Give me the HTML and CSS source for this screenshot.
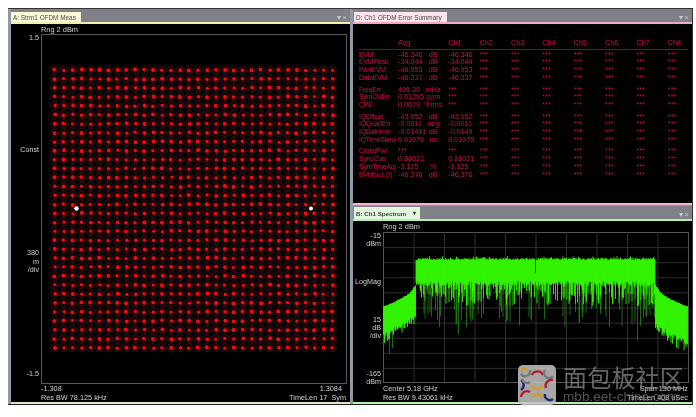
FILE: index.html
```html
<!DOCTYPE html>
<html lang="en">
<head>
<meta charset="utf-8">
<title>OFDM Measurement</title>
<link rel="stylesheet" href="styles.css">
</head>
<body>
<main class="screen">
  <section class="win win-a">
    <header class="bar bar-a">
      <span class="tab tab-a">A: Strm1 OFDM Meas</span>
      <span class="ctl">▾ ×</span>
    </header>
    <div class="body body-a">
      <div class="chart-grid chart-a">
        <div class="rng">Rng 2 dBm</div>
        <div class="ylabels ya">
          <span class="ya1">1.5</span>
          <span class="ya2">Const</span>
          <span class="ya3">380<br>m<br>/div</span>
          <span class="ya4">-1.5</span>
        </div>
        <svg id="constellation" class="plot plot-a" width="306" height="350" viewBox="0 0 306 350"></svg>
        <div class="foot">
          <div class="foot-row"><span>-1.308</span><span class="end-a1">1.3084</span></div>
          <div class="foot-row"><span>Res BW 78.125 kHz</span><span>TimeLen 17&nbsp; Sym</span></div>
        </div>
      </div>
    </div>
  </section>
  <div class="right">
    <section class="win win-d">
      <header class="bar bar-d">
        <span class="tab tab-d">D: Ch1 OFDM Error Summary</span>
        <span class="ctl">▾ ×</span>
      </header>
      <div class="body body-d">
        <table class="summary">
          <thead>
            <tr><th></th><th>Avg</th><th></th><th>Ch1</th><th>Ch2</th><th>Ch3</th><th>Ch4</th><th>Ch5</th><th>Ch6</th><th>Ch7</th><th>Ch8</th></tr>
          </thead>
          <tbody id="rows"></tbody>
        </table>
      </div>
    </section>
    <section class="win win-b">
      <header class="bar bar-b">
        <span class="tab tab-b"><span>B: Ch1 Spectrum</span><span class="tab-arrow">▾</span></span>
        <span class="ctl">▾ ×</span>
      </header>
      <div class="body body-b">
        <div class="chart-grid chart-b">
          <div class="rng">Rng 2 dBm</div>
          <div class="ylabels yb">
            <span class="yb1">-15<br>dBm</span>
            <span class="yb2">LogMag</span>
            <span class="yb3">15<br>dB<br>/div</span>
            <span class="yb4">-165<br>dBm</span>
          </div>
          <svg id="spectrum" class="plot plot-b" width="306" height="151" viewBox="0 0 306 151"></svg>
          <div class="foot foot-b">
            <div class="foot-row"><span>Center 5.18 GHz</span><span>Span 130 MHz</span></div>
            <div class="foot-row"><span>Res BW 9.43061 kHz</span><span>TimeLen 408 uSec</span></div>
          </div>
        </div>
      </div>
    </section>
  </div>
  <aside class="mark">
    <svg class="mark-logo" width="40" height="40" viewBox="0 0 40 40">
      <rect width="38" height="40" rx="5" fill="#c4c4c4" fill-opacity=".85"/>
      <g fill="none" stroke-width="2.4">
        <path d="M3 9a5 5 0 0 0 9 -4" stroke="#77787c"/>
        <path d="M14 10a6 6 0 0 1 11 0" stroke="#b0202c"/>
        <path d="M27 5a5 5 0 0 0 8 6" stroke="#77787c"/>
        <path d="M3 15a6 6 0 0 1 0 10" stroke="#1c2a70"/>
        <path d="M13 20a6 6 0 0 0 11 0" stroke="#d89a20"/>
        <path d="M35 15a6 6 0 0 0 -7 8" stroke="#b0202c"/>
        <path d="M3 32a6 6 0 0 1 9 -5" stroke="#b0202c"/>
        <path d="M14 33a6 6 0 0 1 11 0" stroke="#d89a20"/>
        <path d="M27 29a5 5 0 0 0 8 5" stroke="#1c2a70"/>
      </g>
      <g fill="none" stroke-width="2.4">
        <path d="M3 6a5 5 0 0 1 6 -2" stroke="#d89a20"/>
        <path d="M4 14a5 5 0 0 0 8 3" stroke="#77787c"/>
      </g>
    </svg>
    <div class="mark-text">
      <div class="mark-cn">面包板社区</div>
      <div class="mark-en">mbb.eet-china.com</div>
    </div>
  </aside>
</main>
<script src="chart.js"></script>
</body>
</html>
```

FILE: styles.css
```css
* { box-sizing: border-box; }
html, body { margin: 0; padding: 0; background: #fff; }
body { width: 696px; height: 417px; overflow: hidden; font-family: "Liberation Sans", Arial, sans-serif; }

.screen {
  position: relative;
  display: flex;
  width: 685px;
  height: 397px;
  margin: 8px 0 0 8px;
  background: #8f9aa4;
  border-top: 1px solid #333;
  border-bottom: 1px solid #222;
  border-right: 1px solid #333;
  filter: blur(.45px);
}
.right { display: flex; flex-direction: column; flex: 1; min-width: 0; }
.win { display: flex; flex-direction: column; min-height: 0; }
.win-a { width: 345px; padding: 0 3px; background: #8f9aa4; }
.win-d { height: 196px; border-bottom: 2px solid #f4b0cc; }
.win-b { flex: 1; padding-top: 1px; }

.bar {
  display: flex;
  justify-content: space-between;
  align-items: flex-end;
  height: 15px;
  flex: none;
  background: #7f8088;
  border-bottom: 2px solid;
  padding-top: 3px;
}
.bar-a { border-color: #f0eeb0; }
.bar-d { border-color: #f0a8c4; }
.bar-b { border-color: #b8eeb0; padding-top: 1px; }

.tab {
  display: block;
  height: 100%;
  font-size: 6.4px;
  line-height: 11px;
  padding: 0 2px;
  color: #4a4a4a;
  white-space: nowrap;
  opacity: .99;
}
.tab-a { width: 70px; background: #fdfcd8; }
.tab-d { width: 93px; background: #fde8f0; margin-left: 1px; }
.tab-b { display: flex; gap: 7px; width: 66px; background: #e4f8e0; margin-left: 1px; font-size: 6.2px; font-weight: bold; color: #3c3c3c; line-height: 13px; }
.tab-arrow { font-size: 6px; }
.ctl { font-size: 7.5px; line-height: 9px; color: #c8c8cc; padding-right: 3px; }

.body { flex: 1; background: #000; min-height: 0; color: #d4d4d4; font-size: 7.2px; line-height: 8.5px; }
.body-a { border-bottom: 2px solid #d8e8c0; }
.body-d { padding-top: 15px; }
.body-b { border-bottom: 2px solid #b8eeb0; }

.chart-grid { display: grid; grid-template-rows: auto auto auto; }
.chart-a { grid-template-columns: 30px 306px; padding-top: 2px; }
.chart-b { grid-template-columns: 30px 306px; }
.rng { grid-column: 2; height: 8px; line-height: 8px; font-size: 7.4px; opacity: .99; }
.chart-b .rng { height: 11px; padding-top: 2px; }
.ylabels { grid-column: 1; display: flex; flex-direction: column; text-align: right; padding-right: 2px; opacity: .99; }
.ya { height: 350px; }
.yb { height: 151px; }
.plot { grid-column: 2; display: block; }
.foot { grid-column: 2; opacity: .99; }
.foot-b { padding-top: 1px; }
.foot-row { display: flex; justify-content: space-between; height: 9px; line-height: 9px; font-size: 7.3px; padding-right: 1px; }
.end-a1 { padding-right: 4px; }

.ya1 { margin-top: 0; }
.ya2 { margin-top: 103px; }
.ya3 { margin-top: 95px; }
.ya4 { margin-top: 95px; }

.yb1 { line-height: 8px; }
.yb2 { margin-top: 30px; }
.yb3 { margin-top: 29px; line-height: 8px; }
.yb4 { margin-top: 30px; line-height: 8px; }

.summary { border-collapse: collapse; table-layout: fixed; width: 329px; margin-left: 6px; color: #d80c4a; font-size: 7.2px; line-height: 7.7px; opacity: .99; }
.summary th { font-weight: normal; text-align: left; padding: 0 0 2px; border-bottom: 1px solid #7a1030; height: 9px; white-space: nowrap; }
.summary td { padding: 0; height: 7.7px; white-space: nowrap; }
.summary th:nth-child(1), .summary td:nth-child(1) { width: 39px; font-size: 6.9px; letter-spacing: -.2px; }
.summary th:nth-child(2), .summary td:nth-child(2) { width: 23px; }
.summary th:nth-child(3), .summary td:nth-child(3) { width: 27px; padding-right: 3px; text-align: center; }
.summary th:nth-child(n+4), .summary td:nth-child(n+4) { width: 31.3px; }
.summary th:nth-child(11), .summary td:nth-child(11) { width: 20px; }
.summary tr.first td { padding-top: 4px; height: 11.7px; }
.summary tbody tr:first-child td { padding-top: 1px; height: 8.7px; }

.mark { position: absolute; left: 510px; top: 356px; display: flex; gap: 5px; pointer-events: none; }
.mark-logo { display: block; flex: none; }
.mark-text { margin-top: -2px; }
.mark-cn { font-family: "Noto Sans CJK SC", sans-serif; font-size: 24px; line-height: 27px; color: rgba(140,140,140,.72); letter-spacing: .2px; white-space: nowrap; }
.mark-en { font-size: 13.6px; line-height: 14px; color: rgba(140,140,140,.6); white-space: nowrap; }
```

FILE: chart.js
```js
(function () {
  var seed = 12345;
  function rnd() {
    seed = (seed * 1664525 + 1013904223) % 4294967296;
    return seed / 4294967296;
  }
  var NS = "http://www.w3.org/2000/svg";
  function add(svg, name, attrs) {
    var el = document.createElementNS(NS, name);
    for (var k in attrs) el.setAttribute(k, attrs[k]);
    svg.appendChild(el);
    return el;
  }

  /* constellation */
  var c = document.getElementById("constellation");
  add(c, "rect", { x: .5, y: .5, width: 305, height: 349, fill: "#000", stroke: "#555", "stroke-width": 1.2 });
  var k, j;
  for (j = 0; j < 32; j++) {
    for (k = 0; k < 32; k++) {
      var cx = 13.7 + k * 8.96, cy = 36 + j * 8.96;
      add(c, "circle", { cx: cx, cy: cy, r: 4.2, fill: "#1a0305", stroke: "#3c1c20", "stroke-width": .5 });
      add(c, "circle", {
        cx: (cx + (rnd() - .5) * 1.1).toFixed(2),
        cy: (cy + (rnd() - .5) * 1.1).toFixed(2),
        r: (1.55 + rnd() * .5).toFixed(2),
        fill: "#ff0614"
      });
    }
  }
  add(c, "circle", { cx: 35.5, cy: 174.5, r: 2.2, fill: "#fff" });
  add(c, "circle", { cx: 270, cy: 174.5, r: 2, fill: "#fff" });

  /* spectrum */
  var s = document.getElementById("spectrum");
  add(s, "rect", { x: .5, y: .5, width: 305, height: 150, fill: "#000", stroke: "#555", "stroke-width": 1 });
  var g = "";
  for (k = 1; k < 10; k++) {
    g += "M" + (k * 30.5 + .5) + " 0V151M0 " + (k * 15.1 + .5) + "H306";
  }
  add(s, "path", { d: g, stroke: "#3a3a3a", "stroke-width": .8, fill: "none" });

  var bright = "", dark = "", x;
  for (x = 0.5; x < 305; x += 0.5) {
    var mirror = x < 152.5 ? x : 305 - x;
    var top, bot, deep = 0;
    if (mirror >= 33) {
      top = 26 + rnd() * 2.2 + (rnd() < .08 ? -2 : 0);
      bot = 49 + rnd() * 5;
      var r = rnd();
      if (r < .4) bot = 54 + rnd() * 20;
      if (r < .14) deep = 74 + rnd() * 22;
      if (r < .015) deep = 90 + rnd() * 22;
    } else {
      var t = mirror / 33;
      top = 74 - 10 * t - 8 * t * t + rnd() * 1.2;
      if (mirror > 27) top -= (mirror - 27) * 0.7;
      bot = 101 - 18 * t + rnd() * 5;
      if (rnd() < .25) bot += rnd() * 9;
      if (rnd() < .05) deep = bot + 6 + rnd() * 14;
      if (x > 152.5) bot += 8;
    }
    bright += "M" + x + " " + top.toFixed(1) + "V" + bot.toFixed(1);
    if (deep) dark += "M" + x + " " + bot.toFixed(1) + "V" + deep.toFixed(1);
  }
  add(s, "path", { d: dark, stroke: "#1f9a12", "stroke-width": .7, fill: "none" });
  add(s, "path", { d: bright, stroke: "#35ff00", "stroke-width": .85, fill: "none" });
  add(s, "path", { d: "M152.5 26V41", stroke: "#0c3a08", "stroke-width": 1, fill: "none" });

  /* error summary table */
  var D = "***";
  var groups = [
    [["EVM", "-46.346", "dB", "-46.346"], ["EVMPeak", "-34.044", "dB", "-34.044"], ["PilotEVM", "-46.953", "dB", "-46.953"], ["DataEVM", "-46.337", "dB", "-46.337"]],
    [["FreqErr", "495.39", "mHz", D], ["SymClkErr", "0.01295", "ppm", D], ["CPE", "0.0679", "%rms", D]],
    [["IQOffset", "-43.052", "dB", "-43.052"], ["IQQuadErr", "-0.0011", "deg", "-0.0011"], ["IQGainImb", "-0.01491", "dB", "-0.0149"], ["IQTimeSkew", "0.01975", "ns", "0.01975"]],
    [["CrossPwr", D, "", D], ["SyncCorr", "0.88021", "", "0.88021"], ["SymTimeAdj", "-3.125", "%", "-3.125"], ["EVM(w.LO)", "-46.376", "dB", "-46.376"]]
  ];
  var html = "";
  groups.forEach(function (group) {
    group.forEach(function (row, i) {
      html += "<tr" + (i === 0 ? ' class="first"' : "") + ">";
      row.forEach(function (v) { html += "<td>" + v + "</td>"; });
      for (var n = 0; n < 7; n++) html += "<td>" + D + "</td>";
      html += "</tr>";
    });
  });
  document.getElementById("rows").innerHTML = html;
})();
```
